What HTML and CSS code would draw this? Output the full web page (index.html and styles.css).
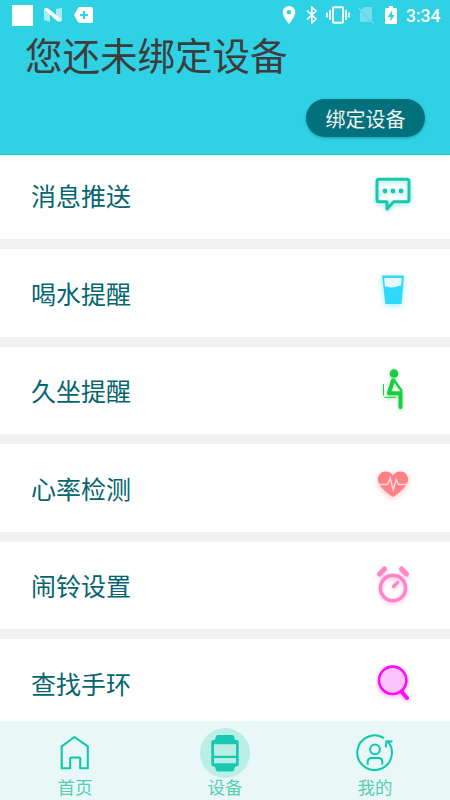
FILE: index.html
```html
<!DOCTYPE html>
<html lang="zh-CN">

<head>
    <meta charset="UTF-8">
    <meta name="viewport" content="width=device-width, initial-scale=1.0">
    <title>设备</title>
    <link rel="stylesheet" href="styles.css">
</head>

<body>
    <header>
        <!-- 状态栏 -->
        <div class="status">
            <div class="status-left">
                <div class="app-block"></div>
                <svg width="20" height="16" viewBox="0 0 20 16">
                    <path d="M1 2l6 4v9l-6-2zM19 1l-6 1v7l6 5z" fill="#a8edf5" />
                    <path d="M1 2Q3 0 6 2l13 11q-2 3-5 1z" fill="#fff" />
                </svg>
                <svg width="19" height="16" viewBox="0 0 19 16">
                    <path d="M6 0h11q2 0 2 2v12q0 2-2 2H6q-1 0-2-1L0 8l4-7q1-1 2-1z" fill="#fff" />
                    <path d="M10 4v8M6 8h8" stroke="#2fd1e5" stroke-width="2" />
                </svg>
            </div>
            <div class="status-right">
                <svg class="pin" width="14" height="18" viewBox="0 0 14 18">
                    <path d="M7 0a6.3 6.3 0 0 0-6.3 6.3C.7 11 7 18 7 18s6.3-7 6.3-11.7A6.3 6.3 0 0 0 7 0zm0 4a2.3 2.3 0 1 1 0 4.6A2.3 2.3 0 0 1 7 4z" fill="#fff" />
                </svg>
                <svg class="bluetooth" width="12" height="18" viewBox="0 0 12 18">
                    <path d="M1 4.5l9 8.5-4.2 4V1L10 5 1 13.5" fill="none" stroke="#fff" stroke-width="1.7" />
                </svg>
                <svg class="vibrate" width="24" height="18" viewBox="0 0 24 18">
                    <rect x="7" y="1.2" width="10" height="15.6" rx="1" fill="none" stroke="#fff" stroke-width="2" />
                    <path d="M4 4v10M1 6.5v5M20 4v10M23 6.5v5" stroke="#fff" stroke-width="1.7" />
                </svg>
                <svg class="sim" width="16" height="18" viewBox="0 0 16 18">
                    <path d="M6 1h8v14L3 4zM2 5v10q0 1 1 1h10z" fill="#74dfec" />
                    <path d="M.5 2l15 15" stroke="#74dfec" stroke-width="1.3" />
                </svg>
                <svg class="battery" width="12" height="18" viewBox="0 0 12 18">
                    <path d="M4 0h4v2h3q1 0 1 1v14q0 1-1 1H1q-1 0-1-1V3q0-1 1-1h3z" fill="#fff" />
                    <path d="M7 4.5L2.8 11h2.7v4.5L9.5 9H7z" fill="#2fd1e5" />
                </svg>
                <span class="time">3:34</span>
            </div>
        </div>
        <h1>您还未绑定设备</h1>
        <button class="bind">绑定设备</button>
    </header>

    <main>
        <div class="list">
            <div class="item">
                <span>消息推送</span>
                <svg class="icon message" viewBox="0 0 50 50">
                    <path d="M11 8.200h28q2 0 2 2v18.600q0 2-2 2H25.500L19 38v-7.200h-8q-2 0-2-2V10.200q0-2 2-2z" fill="none" stroke="#14c9ae" stroke-width="3" stroke-linejoin="round" />
                    <g fill="#14c9ae">
                        <circle cx="17" cy="20" r="2.400" />
                        <circle cx="25" cy="20" r="2.400" />
                        <circle cx="33" cy="20" r="2.400" />
                    </g>
                </svg>
            </div>
            <div class="item">
                <span>喝水提醒</span>
                <svg class="icon water" viewBox="0 0 50 50">
                    <path d="M14 7.500h22L33.500 36h-16z" fill="#2fd9fb" />
                    <path d="M16.200 10h17.600l-.7 7.500q-3 .5-5 1.200-4 1.500-7 .2-2-.8-4.200-.3z" fill="#e9f7fb" />
                </svg>
            </div>
            <div class="item">
                <span>久坐提醒</span>
                <svg class="icon sit" viewBox="0 0 50 50">
                    <circle cx="26" cy="7.500" r="4.300" fill="#14d03c" />
                    <g fill="none" stroke="#14d03c" stroke-linecap="round" stroke-linejoin="round">
                        <path d="M25 14.500l-4.200 12.700h11.700V41" stroke-width="4" />
                        <path d="M26 14l7.500 10.500" stroke-width="2.200" />
                        <path d="M15.500 18.500v10.500M16.500 31.300h11" stroke-width="1" />
                    </g>
                </svg>
            </div>
            <div class="item">
                <span>心率检测</span>
                <svg class="icon heart" viewBox="0 0 50 50">
                    <path d="M25 34C22 32 10 24 10 16.500 10 12 13 8.500 17.500 8.500c3.500 0 6 1.500 7.500 4 1.500-2.500 4-4 7.500-4C37 8.500 40 12 40 16.500 40 24 28 32 25 34z" fill="#ff8087" />
                    <path d="M11 21.500h8.500l2.700-6.500 3 12 3-10.500 2.300 5h8.500" fill="none" stroke="#ffd9dc" stroke-width="1.400" />
                </svg>
            </div>
            <div class="item">
                <span>闹铃设置</span>
                <svg class="icon alarm" viewBox="0 0 50 50">
                    <g fill="none" stroke="#ff84c8" stroke-linecap="round">
                        <circle cx="25" cy="27" r="12.600" stroke-width="3.600" />
                        <path d="M25.600 25.500l4-4.200" stroke-width="3.400" />
                        <path d="M11.500 13l5-5M33.500 8l5 5" stroke-width="5" />
                    </g>
                </svg>
            </div>
            <div class="item">
                <span>查找手环</span>
                <svg class="icon find" viewBox="0 0 50 50">
                    <circle cx="24.700" cy="22.300" r="13.700" fill="#fcc4fc" stroke="#ff0cf8" stroke-width="2.600" />
                    <path d="M33.500 33.500l5.500 6.500" stroke="#ff0cf8" stroke-width="4" stroke-linecap="round" />
                </svg>
            </div>
        </div>
    </main>

    <!-- 底部导航 -->
    <nav>
        <div class="tab">
            <svg viewBox="0 0 50 50">
                <path d="M11.700 18.300L24.500 9l13.300 9.300v22h-7.600V30.500q0-1-1-1h-8q-1 0-1 1v9.800h-8.500z" fill="none" stroke="#0cc9ac" stroke-width="2.100" stroke-linejoin="round" />
            </svg>
            <span>首页</span>
        </div>
        <div class="tab active">
            <svg viewBox="0 0 50 50">
                <path d="M17.500 7h15q1.200 0 1.700 2l1 3h1.500q2 0 2 2v22.500q0 2-2 2h-1.500l-1 3q-.5 2-1.700 2h-15q-1.200 0-1.700-2l-1-3h-1.500q-2 0-2-2V14q0-2 2-2h1.500l1-3q.5-2 1.700-2z" fill="#19c8b0" />
                <path d="M14 16.300h22v11.500H14zM14 30h22v5.200H14z" fill="#b9efe5" />
            </svg>
            <span>设备</span>
        </div>
        <div class="tab">
            <svg viewBox="0 0 50 50">
                <g fill="none" stroke="#0cc9ac" stroke-width="2">
                    <path d="M34 10.200A17.300 17.300 0 1 0 37.500 13.200" />
                    <path d="M35.800 19.300l.7-6 6 .3" />
                    <circle cx="25" cy="21.300" r="4.900" />
                    <path d="M17.700 36.800V34q0-4 4-4h6.600q4 0 4 4v2.800" />
                </g>
            </svg>
            <span>我的</span>
        </div>
    </nav>
</body>

</html>
```
FILE: styles.css
```css
* {
    box-sizing: border-box;
}

body {
    display: flex;
    flex-direction: column;
    height: 100vh;
    margin: 0;
    overflow: hidden;
    background: #f1f1f1;
    font-family: "Noto Sans CJK SC", sans-serif;
}

header {
    display: flex;
    flex-direction: column;
    flex-shrink: 0;
    height: 155px;
    background: #2fd1e5;
    border-bottom: 1px solid #17c5d9;
}

.status {
    display: flex;
    justify-content: space-between;
    height: 30px;
    padding: 0 10px 0 12px;
}

.status-left,
.status-right {
    display: flex;
    align-items: center;
}

.status-left {
    gap: 11px;
}

.app-block {
    width: 21px;
    height: 21px;
    background: #fff;
}

.status-left svg:nth-child(2) {
    margin-left: -1px;
}

.bluetooth {
    margin-left: 10px;
}

.vibrate {
    margin-left: 8px;
}

.sim {
    margin-left: 8px;
}

.battery {
    margin: 0 9px 0 11px;
}

.time {
    width: 34px;
    color: #fff;
    font: 500 17.500px/20px Roboto, sans-serif;
    white-space: nowrap;
    padding-top: 1px;
}

h1 {
    margin: 0 0 0 25px;
    color: #3d3d3d;
    font-size: 37.500px;
    font-weight: 400;
    line-height: 48px;
}

.bind {
    align-self: flex-end;
    width: 119px;
    height: 38px;
    margin: 21px 25px 0 0;
    padding: 2px 0 0;
    border: 0;
    border-radius: 19px;
    background: #03717c;
    box-shadow: 0 1px 3px rgba(0, 80, 90, 0.4);
    color: #f1f1f1;
    font-family: inherit;
    font-size: 20px;
    line-height: 36px;
}

main {
    flex: 1;
    min-height: 0;
    overflow: hidden;
}

/* 列表向上滚动了一点 */
.list {
    display: flex;
    flex-direction: column;
    gap: 10px;
    margin-top: -3.500px;
}

.item {
    display: flex;
    align-items: center;
    justify-content: space-between;
    height: 87.500px;
    padding: 0 32px 0 31px;
    background: #fff;
    color: #056570;
    font-size: 25px;
}

.icon {
    width: 50px;
    height: 50px;
    margin-top: 1px;
    overflow: visible;
}

.message {
    filter: drop-shadow(0 2px 2px rgba(20, 201, 174, 0.4));
}

.water {
    filter: drop-shadow(0 2px 3px rgba(47, 217, 251, 0.45));
}

.sit {
    filter: drop-shadow(0 2px 1px rgba(20, 208, 60, 0.35));
}

.heart {
    filter: drop-shadow(0 2px 3px rgba(255, 128, 135, 0.45));
}

.alarm {
    filter: drop-shadow(0 2px 2px rgba(255, 132, 200, 0.4));
}

.find {
    filter: drop-shadow(0 2px 2px rgba(255, 12, 248, 0.3));
}

nav {
    display: flex;
    flex-shrink: 0;
    height: 79px;
    background: #e9f8f7;
}

.tab {
    display: flex;
    flex: 1;
    flex-direction: column;
    align-items: center;
    padding-top: 6.500px;
    color: #56cfb3;
    font-size: 17.500px;
    line-height: 17px;
}

.tab svg {
    width: 50px;
    height: 50px;
    border-radius: 50%;
}

.tab.active svg {
    background: #b9efe5;
}
```
